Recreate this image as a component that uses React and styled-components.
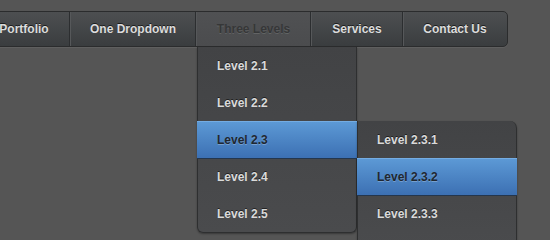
import React from "react";
import styled, { createGlobalStyle } from "styled-components";

const Global = createGlobalStyle`
  html, body { margin: 0; padding: 0; background: #555555; overflow: hidden; }
  body { font-family: "Liberation Sans", Arial, sans-serif; }
`;

const Page = styled.div`
  width: 550px;
  height: 240px;
  padding-top: 11px;
  box-sizing: border-box;
`;

const Bar = styled.ul`
  display: flex;
  list-style: none;
  margin: 0 0 0 -23px;
  padding: 0;
  width: max-content;
  height: 36px;
  box-sizing: border-box;
  border: 1px solid #2b2c2d;
  border-radius: 0 5px 5px 0;
  background: linear-gradient(#4d4f51, #3a3d3f);
  box-shadow: 0 1px 0 rgba(255, 255, 255, 0.06);
`;

const NavItem = styled.li`
  position: relative;
  display: flex;
  align-items: center;
  justify-content: center;
  width: ${(p) => p.$w}px;
  box-sizing: border-box;
  border-left: 1px solid ${(p) => (p.$first ? "transparent" : "#56585a")};
  border-right: 1px solid ${(p) => (p.$last ? "transparent" : "#2c2e30")};
  font-size: 12px;
  font-weight: bold;
  color: ${(p) => (p.$active ? "#363738" : "#dcdcdc")};
  text-shadow: ${(p) =>
    p.$active ? "0 1px 0 rgba(255,255,255,0.12)" : "0 -1px 0 rgba(0,0,0,0.6)"};
  background: ${(p) => (p.$active ? "linear-gradient(#505153, #4b4c4e)" : "none")};
  white-space: nowrap;
`;

const Dropdown = styled.ul`
  position: absolute;
  top: ${(p) => p.$top};
  left: ${(p) => p.$left};
  width: 160px;
  margin: 0;
  padding: 0 0 ${(p) => p.$pb || 0}px;
  list-style: none;
  box-sizing: border-box;
  background: linear-gradient(#424345, #4a4b4d);
  border: 1px solid #2e2f30;
  border-top: none;
  border-radius: ${(p) => p.$radius};
  box-shadow: 0 1px 2px rgba(0, 0, 0, 0.35);
  z-index: ${(p) => p.$z};
`;

const MenuItem = styled.li`
  position: relative;
  height: 37px;
  display: flex;
  align-items: center;
  padding: 1px 0 0 19px;
  box-sizing: border-box;
  font-size: 12px;
  font-weight: bold;
  white-space: nowrap;
  color: ${(p) => (p.$hl ? "#1f2730" : "#dadada")};
  text-shadow: ${(p) =>
    p.$hl ? "0 1px 0 rgba(255,255,255,0.25)" : "0 -1px 0 rgba(0,0,0,0.55)"};
  background: ${(p) => (p.$hl ? "linear-gradient(#5d9ad6, #3c70b3)" : "none")};
  box-shadow: ${(p) =>
    p.$hl ? "inset 0 1px 0 #74ace2, 0 1px 0 #24364d" : "none"};
  margin: ${(p) => (p.$hl ? "0 -1px 0 -1px" : "0")};
  padding-left: ${(p) => (p.$hl ? "20px" : "19px")};
`;

export default function App() {
  return (
    <Page>
      <Global />
      <Bar>
        <NavItem $first $w={92}>Portfolio</NavItem>
        <NavItem $w={126}>One Dropdown</NavItem>
        <NavItem $active $w={115}>
          Three Levels
          <Dropdown $top="35px" $left="0" $radius="0 0 6px 6px" $z={2}>
            <MenuItem>Level 2.1</MenuItem>
            <MenuItem>Level 2.2</MenuItem>
            <MenuItem $hl>
              Level 2.3
              <Dropdown $top="0" $left="160px" $radius="0 7px 0 0" $z={3} $pb={14}>
                <MenuItem>Level 2.3.1</MenuItem>
                <MenuItem $hl>Level 2.3.2</MenuItem>
                <MenuItem>Level 2.3.3</MenuItem>
              </Dropdown>
            </MenuItem>
            <MenuItem>Level 2.4</MenuItem>
            <MenuItem>Level 2.5</MenuItem>
          </Dropdown>
        </NavItem>
        <NavItem $w={92}>Services</NavItem>
        <NavItem $last $w={104}>Contact Us</NavItem>
      </Bar>
    </Page>
  );
}
